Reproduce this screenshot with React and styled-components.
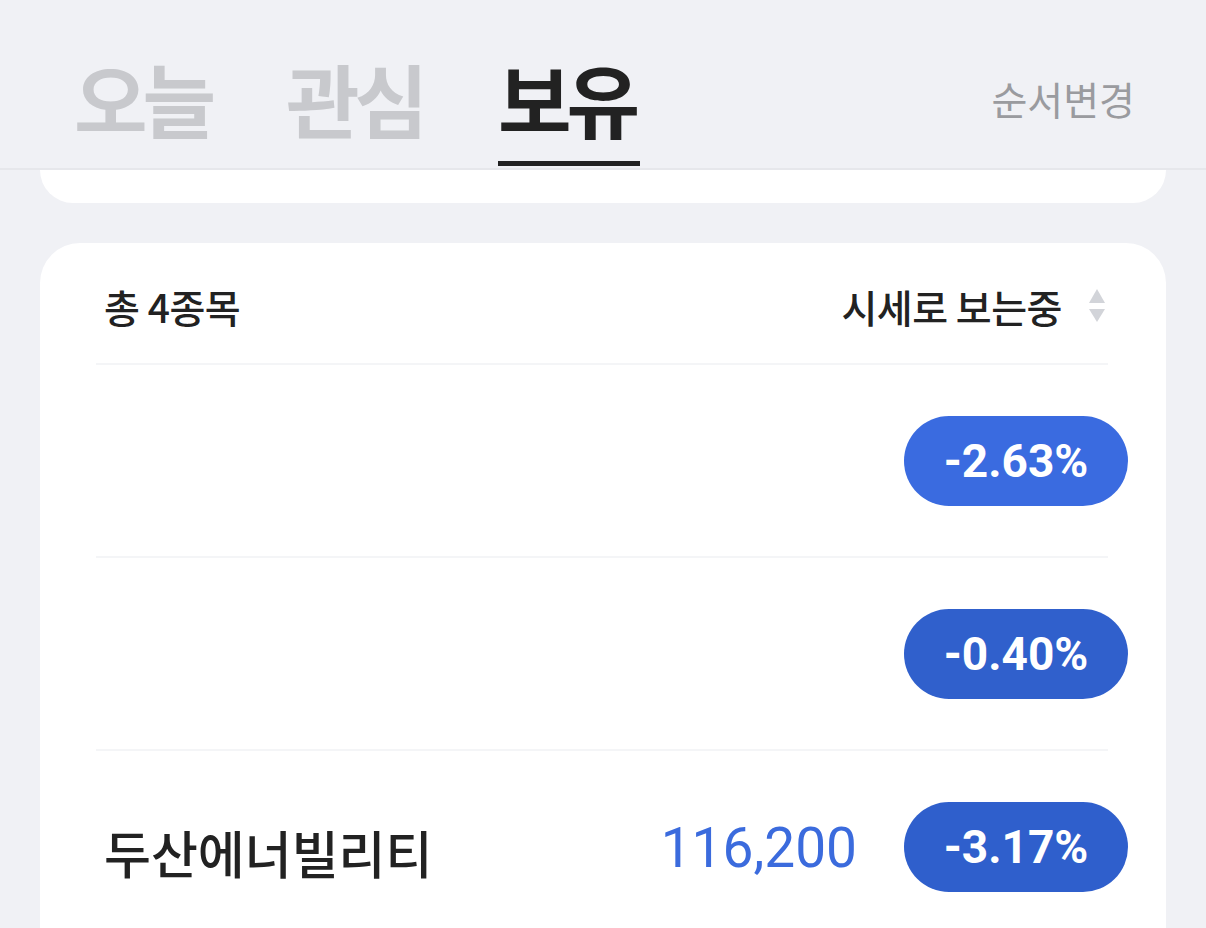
import React from "react";
import styled, { createGlobalStyle } from "styled-components";

const Global = createGlobalStyle`
  html, body { margin: 0; padding: 0; background: #f0f1f5; }
  body { font-family: "Noto Sans CJK KR", "Noto Sans", sans-serif; -webkit-font-smoothing: antialiased; }
  * { box-sizing: border-box; }
`;

const Page = styled.div`
  width: 1206px;
  min-height: 928px;
  background: #f0f1f5;
  overflow: hidden;
`;

const Header = styled.header`
  height: 170px;
  padding: 30px 71px 0 74px;
  display: flex;
  align-items: flex-end;
  border-bottom: 2px solid #e6e7eb;
  background: #f0f1f5;
`;

const Tabs = styled.nav`
  display: flex;
  align-items: flex-end;
  gap: 70px;
`;

const Tab = styled.div`
  font-size: 80px;
  font-weight: 700;
  line-height: 84px;
  letter-spacing: -5px;
  width: 142px;
  white-space: nowrap;
  color: ${(p) => (p.$active ? "#222222" : "#c8c9cd")};
  padding-bottom: 22px;
  margin-bottom: 2px;
  border-bottom: 5px solid ${(p) => (p.$active ? "#222222" : "transparent")};
`;

const OrderButton = styled.div`
  margin-left: auto;
  align-self: center;
  font-size: 39px;
  font-weight: 400;
  color: #9a9b9f;
  line-height: 44px;
  margin-top: -2px;
`;

const TailCard = styled.div`
  margin: 0 40px;
  height: 33px;
  background: #ffffff;
  border-radius: 0 0 36px 36px;
`;

const Card = styled.section`
  margin: 40px 40px 0;
  background: #ffffff;
  border-radius: 40px 40px 0 0;
  padding: 0 38px 0 64px;
  min-height: 700px;
`;

const Summary = styled.div`
  height: 120px;
  display: flex;
  align-items: center;
  justify-content: space-between;
  padding-right: 22px;
  padding-top: 6px;
`;

const Count = styled.div`
  font-size: 39px;
  font-weight: 500;
  color: #222222;
  letter-spacing: -0.5px;
`;

const SortLabel = styled.div`
  display: flex;
  align-items: center;
  gap: 26px;
  font-size: 39px;
  font-weight: 500;
  color: #222222;
  letter-spacing: -0.5px;
`;

const Divider = styled.div`
  height: 2px;
  background: #f4f5f7;
  margin: 0 20px 0 -8px;
`;

const Row = styled.div`
  height: 191px;
  display: flex;
  align-items: center;
`;

const Name = styled.div`
  flex: 1;
  font-size: 51px;
  font-weight: 500;
  color: #222222;
  padding-top: 10px;
`;

const Price = styled.div`
  font-family: Roboto, "Noto Sans", sans-serif;
  font-size: 55px;
  font-weight: 400;
  color: #3b6bdd;
  margin-right: 47px;
  padding-top: 2px;
`;

const Badge = styled.div`
  width: 224px;
  height: 90px;
  border-radius: 45px;
  background: ${(p) => p.$color};
  color: #ffffff;
  font-family: Roboto, "Noto Sans", sans-serif;
  font-size: 46px;
  font-weight: 700;
  display: flex;
  align-items: center;
  justify-content: center;
`;

const SortIcon = () => (
  <svg width="18" height="34" viewBox="0 0 18 34" aria-hidden="true">
    <path d="M9 0 L17 14 H1 Z" fill="#d2d4d9" />
    <path d="M1 20 H17 L9 33 Z" fill="#d2d4d9" />
  </svg>
);

const rows = [
  { name: "", price: "", rate: "-2.63%", color: "#3a6be0" },
  { name: "", price: "", rate: "-0.40%", color: "#3060cc" },
  { name: "두산에너빌리티", price: "116,200", rate: "-3.17%", color: "#2f5fcc" },
];

export default function App() {
  return (
    <Page>
      <Global />
      <Header>
        <Tabs>
          <Tab>오늘</Tab>
          <Tab>관심</Tab>
          <Tab $active>보유</Tab>
        </Tabs>
        <OrderButton>순서변경</OrderButton>
      </Header>
      <TailCard />
      <Card>
        <Summary>
          <Count>총 4종목</Count>
          <SortLabel>
            시세로 보는중
            <SortIcon />
          </SortLabel>
        </Summary>
        {rows.map((r, i) => (
          <React.Fragment key={i}>
            <Divider />
            <Row>
              <Name>{r.name}</Name>
              <Price>{r.price}</Price>
              <Badge $color={r.color}>{r.rate}</Badge>
            </Row>
          </React.Fragment>
        ))}
      </Card>
    </Page>
  );
}
